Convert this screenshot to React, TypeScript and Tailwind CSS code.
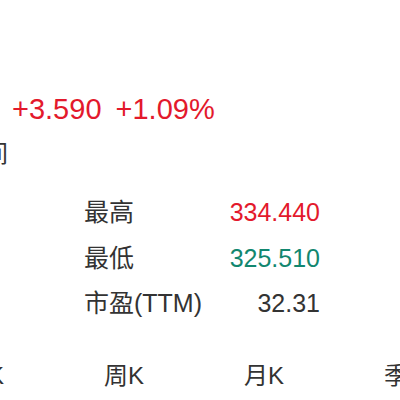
import React from 'react';

const STATS = [
  { label: '最高', value: '334.440', color: 'text-[#e3192c]' },
  { label: '最低', value: '325.510', color: 'text-[#12876f]' },
  { label: '市盈(TTM)', value: '32.31', color: 'text-[#333333]' },
];

const TABS = ['日K', '周K', '月K', '季K'];

export default function App() {
  return (
    <div
      className="w-[400px] h-[400px] overflow-hidden bg-white text-[#333333]"
      style={{ fontFamily: '"Liberation Sans", "Noto Sans CJK SC", sans-serif' }}
    >
      {/* change */}
      <div className="pt-[91px] pl-[12px] flex items-center text-[29px] leading-[36px] text-[#e3192c] whitespace-nowrap">
        <span>+3.590</span>
        <span className="ml-[14px]">+1.09%</span>
      </div>

      {/* time label, cut off at the left edge */}
      <div className="mt-[11px] -ml-[16px] text-[24px] leading-[32px] whitespace-nowrap">间</div>

      {/* stats */}
      <div className="mt-[20px] ml-[84px] w-[236px] flex flex-col">
        {STATS.map((s) => (
          <div key={s.label} className="flex items-center justify-between h-[45.5px] text-[25px]">
            <span>{s.label}</span>
            <span className={s.color}>{s.value}</span>
          </div>
        ))}
      </div>

      {/* period tabs */}
      <div className="mt-[33px] -ml-[86px] flex whitespace-nowrap">
        {TABS.map((t) => (
          <div key={t} className="w-[140px] shrink-0 text-center text-[24px] leading-[32px] text-[#333333]">
            {t}
          </div>
        ))}
      </div>
    </div>
  );
}
